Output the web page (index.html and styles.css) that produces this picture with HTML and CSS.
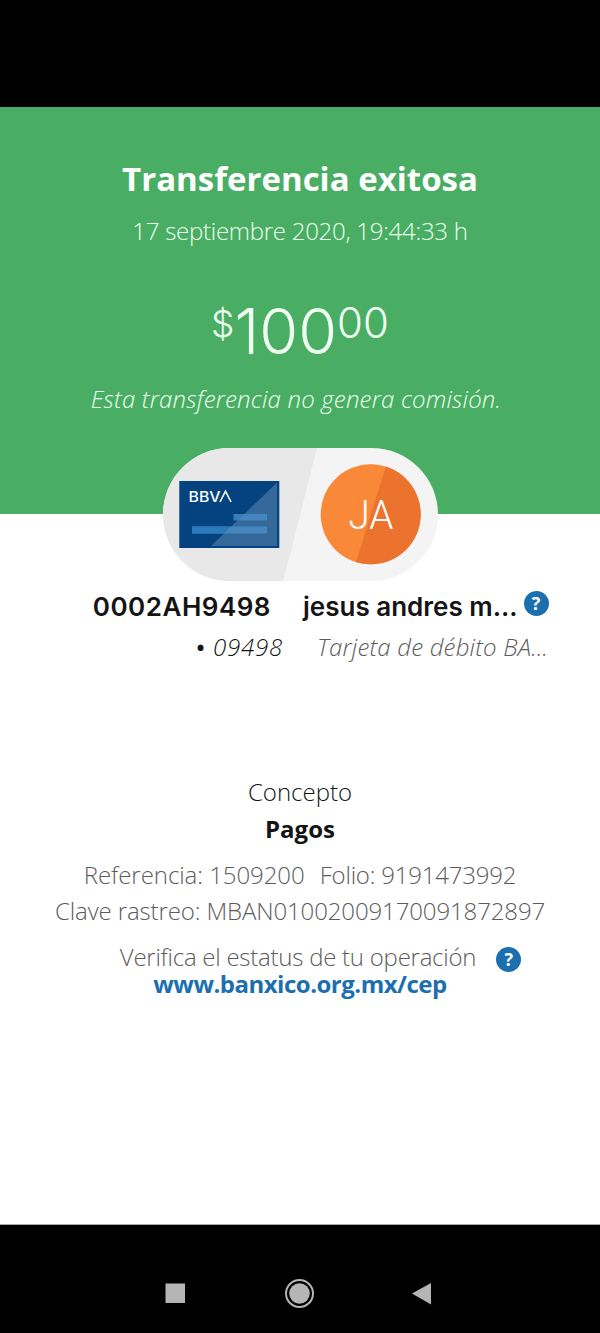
FILE: index.html
```
<!DOCTYPE html>
<html lang="es">
<head>
  <meta charset="UTF-8" />
  <meta name="viewport" content="width=device-width, initial-scale=1.0" />
  <title>Transferencia exitosa</title>
  <link rel="stylesheet" href="styles.css">
</head>
<body>
  <div class="status-bar"></div>

  <header class="hero">
    <h1>Transferencia exitosa</h1>
    <p class="date">17 septiembre 2020, 19:44:33 h</p>
    <div class="amount">
      <span class="currency">$</span>
      <span class="integer">100</span>
      <span class="cents">00</span>
    </div>
    <p class="fee">Esta transferencia no genera comisión.</p>
  </header>

  <main>
    <!-- Origin card and recipient avatar -->
    <svg class="pill" width="275" height="134" viewBox="0 0 275 134">
      <defs>
        <clipPath id="pillShape"><rect width="275" height="133" rx="66.500" /></clipPath>
        <clipPath id="avatarShape"><circle cx="207.700" cy="66.300" r="50" /></clipPath>
      </defs>
      <g clip-path="url(#pillShape)">
        <rect width="275" height="134" fill="#f4f4f4" />
        <path d="M154 0L120 134H0V0Z" fill="#e8e8e9" />
      </g>
      <rect x="16.300" y="33" width="100" height="67" fill="#04437f" />
      <path d="M114 34.500V98H48Z" fill="#35699b" />
      <path d="M70.500 66H104V72.500H70.500ZM29 78.500H104V85.500H29Z" fill="#4a90c8" fill-opacity=".75" />
      <path d="M29 78.500H67.500L60.500 85.500H29Z" fill="#2a7abb" />
      <text class="card-logo" x="25.500" y="54" textLength="32" lengthAdjust="spacingAndGlyphs">BBV</text>
      <path d="M57 54L62.500 43.200L68 54" fill="none" stroke="#fff" stroke-width="1.600" />
      <g clip-path="url(#avatarShape)">
        <rect x="157" y="16" width="102" height="102" fill="#f98838" />
        <path d="M224 15L191.500 119H260V15Z" fill="#eb732d" />
      </g>
      <text class="initials" x="208" y="80.500" textLength="45" lengthAdjust="spacingAndGlyphs">JA</text>
    </svg>

    <section class="accounts">
      <div class="origin">
        <div class="name">0002AH9498</div>
        <div class="detail"><span class="bullet">•</span> 09498</div>
      </div>
      <div class="recipient">
        <div class="name">jesus andres m... <span class="help">?</span></div>
        <div class="detail">Tarjeta de débito BA...</div>
      </div>
    </section>

    <section class="concept">
      <p>Concepto</p>
      <p class="concept-value">Pagos</p>
    </section>

    <section class="references">
      <p class="reference-row"><span>Referencia: 1509200</span><span class="folio">Folio: 9191473992</span></p>
      <p class="tracking">Clave rastreo: MBAN01002009170091872897</p>
      <div class="verify">Verifica el estatus de tu operación <span class="help">?</span></div>
      <a class="link">www.banxico.org.mx/cep</a>
    </section>
  </main>

  <nav class="nav-bar">
    <svg width="600" height="108" viewBox="0 0 600 108" fill="#b5b5b5">
      <rect x="165.500" y="58.500" width="19.500" height="19.500" />
      <circle cx="299.500" cy="68.500" r="10.300" />
      <circle cx="299.500" cy="68.500" r="13.500" fill="none" stroke="#b5b5b5" stroke-width="2" />
      <path d="M412 68.500L431 58V79.500Z" />
    </svg>
  </nav>
</body>
</html>
```
FILE: styles.css
```
:root {
  --green: #49ae64;
  --blue: #1c6fae;
  --ink: #141414;
  --gray: #5c5c5c;
}

* {
  box-sizing: border-box;
}

body {
  margin: 0;
  height: 1333px;
  display: flex;
  flex-direction: column;
  background: #fff;
  color: var(--ink);
  font-family: "Open Sans", sans-serif;
  font-size: 24px;
  font-weight: 330;
  line-height: 30px;
}

h1, p {
  margin: 0;
}

.status-bar {
  height: 107px;
  background: #000;
}

.hero {
  height: 407px;
  padding-top: 52px;
  background: var(--green);
  color: #effff2;
  text-align: center;
}

h1 {
  font-size: 33px;
  line-height: 40px;
  color: #fff;
}

.date {
  margin-top: 17px;
  letter-spacing: -0.27px;
}

.amount {
  display: flex;
  justify-content: center;
  margin-top: 52px;
  height: 64px;
  font-family: "Inter", sans-serif;
  font-weight: 300;
}

.currency {
  font-size: 37px;
  line-height: 51px;
}

.integer {
  font-size: 63px;
  line-height: 66px;
}

.cents {
  font-size: 42px;
  line-height: 49px;
}

.fee {
  margin: 22px 8px 0 0;
  font-style: italic;
  letter-spacing: 0.2px;
}

main {
  flex: 1;
  text-align: center;
}

.pill {
  display: block;
  margin: -66px auto 0;
  position: relative;
}

.card-logo {
  font: 500 14.5px "Inter", sans-serif;
  fill: #fff;
}

.initials {
  font: 300 41px "Roboto", sans-serif;
  fill: #fff;
  text-anchor: middle;
}

.accounts {
  display: flex;
  margin-top: 7px;
}

.origin {
  width: 283px;
  text-align: right;
}

.origin .name {
  padding-right: 12px;
  letter-spacing: 0.5px;
}

.recipient {
  margin-left: 20px;
  text-align: left;
}

.recipient .name {
  display: flex;
  gap: 6px;
}

.name {
  font-family: "Inter", sans-serif;
  font-size: 26px;
  font-weight: 570;
  line-height: 36px;
}

.detail {
  margin-top: 6px;
  line-height: 32px;
  font-style: italic;
  letter-spacing: 0.2px;
}

.origin .detail {
  letter-spacing: 0.8px;
}

.recipient .detail {
  padding-left: 14px;
  color: var(--gray);
}

.bullet {
  font-style: normal;
  font-weight: 600;
}

.help {
  display: inline-block;
  width: 25px;
  height: 25px;
  margin-top: 2px;
  border-radius: 50%;
  background: var(--blue);
  color: #fff;
  font: 700 18px/25px "Open Sans", sans-serif;
  text-align: center;
}

.concept {
  margin-top: 114px;
}

.concept-value {
  margin-top: 7px;
  font-weight: 700;
}

.references {
  margin-top: 16px;
  color: var(--gray);
}

.reference-row {
  display: flex;
  justify-content: center;
  gap: 15px;
  letter-spacing: -0.05px;
}

.folio {
  letter-spacing: -0.2px;
}

.tracking {
  margin-top: 6px;
  letter-spacing: -0.12px;
}

.verify {
  display: flex;
  justify-content: center;
  gap: 20px;
  height: 27px;
  margin-top: 17px;
  padding-left: 41px;
  line-height: 27px;
  letter-spacing: -0.25px;
}

.verify .help {
  margin-top: 4px;
}

.link {
  display: block;
  color: var(--blue);
  font-weight: 700;
  line-height: 27px;
  letter-spacing: -0.5px;
}

.nav-bar {
  height: 109px;
  background: #000;
  border-top: 1px solid #aaa;
}
```
